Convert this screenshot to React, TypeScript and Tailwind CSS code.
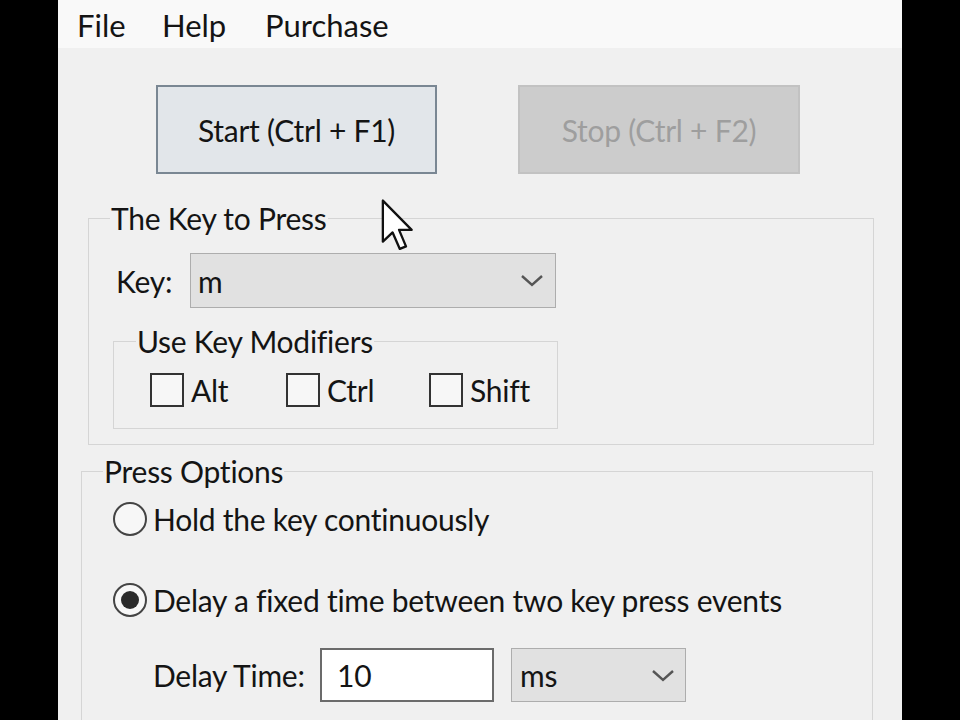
export default function App() {
  const Chevron = () => (
    <svg width="24" height="15" viewBox="0 0 24 15" className="shrink-0">
      <path d="M2 3 L12 12 L22 3" fill="none" stroke="#555" strokeWidth="2.4" />
    </svg>
  );
  return (
    <div className="w-[960px] h-[720px] bg-black pl-[58px] overflow-hidden font-['Lato',sans-serif] text-[30px] tracking-[-0.25px] leading-[40px] text-[#141414]">
      <div className="relative w-[844px] h-[720px] bg-[#f0f0f0] flex flex-col overflow-hidden">
        {/* menu bar */}
        <div className="h-[48px] shrink-0 bg-[#f9f9f9] flex items-center pl-[19px] text-[31px] tracking-normal pt-[2px]">
          <span className="w-[85px]">File</span>
          <span className="w-[103px]">Help</span>
          <span>Purchase</span>
        </div>

        {/* buttons */}
        <div className="flex pl-[98px] pt-[37px] gap-[81px] shrink-0">
          <div className="w-[281px] h-[89px] border-2 border-[#7a8793] bg-[#e2e6ea] flex items-center justify-center">
            Start (Ctrl + F1)
          </div>
          <div className="w-[282px] h-[89px] border-2 border-[#c2c2c2] bg-[#cccccc] flex items-center justify-center text-[#9e9e9e]">
            Stop (Ctrl + F2)
          </div>
        </div>

        {/* group 1 */}
        <fieldset className="ml-[30px] mr-[28px] mt-[24px] border border-[#d5d5d5] shrink-0">
          <legend className="ml-[21px] px-[1px]">The Key to Press</legend>
          <div className="pl-[24px] pt-[15px] pb-[15px]">
            <div className="flex items-center h-[55px] pl-[3px]">
              <span className="w-[74px]">Key:</span>
              <div className="w-[366px] h-[55px] border border-[#adadad] bg-[#e1e1e1] flex items-center justify-between pl-[7px] pr-[11px]">
                <span>m</span>
                <Chevron />
              </div>
            </div>
            <fieldset className="mt-[13px] w-[445px] border border-[#d5d5d5]">
              <legend className="ml-[22px] px-[1px]">Use Key Modifiers</legend>
              <div className="flex items-center pl-[36px] pt-[9px] pb-[18px]">
                <div className="w-[136px] flex items-center">
                  <div className="w-[34px] h-[34px] border-2 border-[#333] bg-[#f7f7f7]" />
                  <span className="ml-[7px]">Alt</span>
                </div>
                <div className="w-[143px] flex items-center">
                  <div className="w-[34px] h-[34px] border-2 border-[#333] bg-[#f7f7f7]" />
                  <span className="ml-[7px]">Ctrl</span>
                </div>
                <div className="flex items-center">
                  <div className="w-[34px] h-[34px] border-2 border-[#333] bg-[#f7f7f7]" />
                  <span className="ml-[7px]">Shift</span>
                </div>
              </div>
            </fieldset>
          </div>
        </fieldset>

        {/* group 2 */}
        <fieldset className="ml-[23px] mr-[29px] mt-[6px] border border-[#d5d5d5] shrink-0">
          <legend className="ml-[21px] px-[1px]">Press Options</legend>
          <div className="pl-[31px] pt-[11px] pb-[60px]">
            <div className="flex items-center h-[34px]">
              <div className="w-[34px] h-[34px] rounded-full border-2 border-[#444] bg-[#f7f7f7]" />
              <span className="ml-[6px]">Hold the key continuously</span>
            </div>
            <div className="flex items-center h-[34px] mt-[47px]">
              <div className="w-[34px] h-[34px] rounded-full border-2 border-[#444] bg-[#f7f7f7] flex items-center justify-center">
                <div className="w-[18px] h-[18px] rounded-full bg-[#2a2a2a]" />
              </div>
              <span className="ml-[6px]">Delay a fixed time between two key press events</span>
            </div>
            <div className="flex items-center h-[54px] mt-[31px] pl-[40px]">
              <span className="w-[167px]">Delay Time:</span>
              <div className="w-[174px] h-[54px] border-2 border-[#6b6b6b] bg-white flex items-center pl-[15px]">10</div>
              <div className="ml-[17px] w-[175px] h-[54px] border border-[#adadad] bg-[#e1e1e1] flex items-center justify-between pl-[8px] pr-[10px]">
                <span>ms</span>
                <Chevron />
              </div>
            </div>
          </div>
        </fieldset>

        {/* mouse cursor */}
        <svg className="absolute left-[322px] top-[198px]" width="34" height="54" viewBox="0 0 13 21">
          <path d="M1 1 L1 17 L4.8 13.4 L7.6 19.8 L10 18.8 L7.3 12.4 L12.2 12.4 Z" fill="#fff" stroke="#111" strokeWidth="0.9" strokeLinejoin="round" />
        </svg>
      </div>
    </div>
  );
}
